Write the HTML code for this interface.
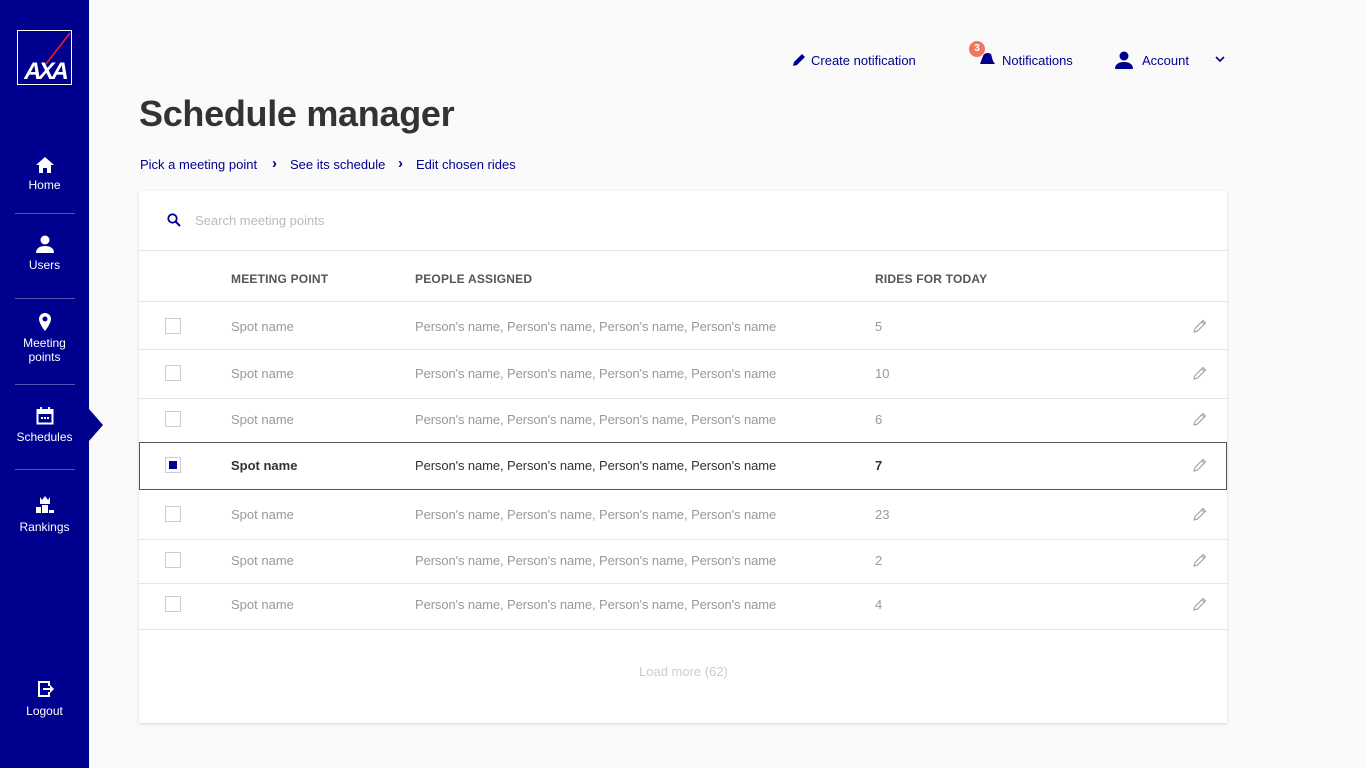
<!DOCTYPE html>
<html><head><meta charset="utf-8"><style>
*{margin:0;padding:0;box-sizing:border-box}
body{width:1366px;height:768px;background:#fafafa;font-family:"Liberation Sans",sans-serif;position:relative;overflow:hidden}
.sb{position:absolute;left:0;top:0;width:89px;height:768px;background:#00008f;color:#fff}
.logo{position:absolute;left:17px;top:30px;width:55px;height:55px;border:1px solid #fff}
.nav{position:absolute;left:0;width:89px;text-align:center;font-size:12px;line-height:14px}
.nav svg{display:block;margin:0 auto 4px}
.sep{position:absolute;left:15px;width:60px;height:1px;background:#5555b5}
.a{position:absolute;left:89px;top:409px;width:0;height:0;border-top:16px solid transparent;border-bottom:16px solid transparent;border-left:14px solid #00008f}
.t{position:absolute;font-size:13px;color:#00008f}
h1{position:absolute;left:139px;top:93px;font-size:36px;font-weight:bold;color:#333;letter-spacing:-0.3px}
.card{position:absolute;left:139px;top:191px;width:1088px;height:532px;background:#fff;box-shadow:0 1px 3px rgba(0,0,0,.15)}
.hl{position:absolute;left:0;width:1088px;height:1px;background:#e5e5e5}
.c{position:absolute;font-size:13px;color:#999;white-space:nowrap}
.cb{position:absolute;width:16px;height:16px;border:1px solid #ccc}
.th{position:absolute;top:81px;font-size:12px;font-weight:bold;color:#555;letter-spacing:.2px}
</style></head><body>
<div class="sb">
<div class="logo"><svg width="55" height="55" viewBox="0 0 55 55"><line x1="28" y1="33" x2="52" y2="2" stroke="#ff1721" stroke-width="1.5"/><text x="27" y="48" text-anchor="middle" font-family="Liberation Sans" font-weight="bold" font-style="italic" font-size="24" fill="#fff" letter-spacing="-3">AXA</text></svg></div>
<div class="nav" style="top:156px"><svg width="20" height="18" viewBox="0 0 20 18"><path d="M10 1L1 9h3v8h4v-5h4v5h4V9h3z" fill="#fff"/></svg>Home</div>
<div class="sep" style="top:213px"></div>
<div class="nav" style="top:234px"><svg width="20" height="20" viewBox="0 0 20 20"><circle cx="10" cy="6" r="4.5" fill="#fff"/><path d="M1 19c0-5 4-7 9-7s9 2 9 7z" fill="#fff"/></svg>Users</div>
<div class="sep" style="top:298px"></div>
<div class="nav" style="top:312px"><svg width="16" height="20" viewBox="0 0 16 20"><path d="M8 1a6 6 0 0 0-6 6c0 4.5 6 12 6 12s6-7.5 6-12a6 6 0 0 0-6-6zm0 8.5a2.5 2.5 0 1 1 0-5 2.5 2.5 0 0 1 0 5z" fill="#fff"/></svg>Meeting<br>points</div>
<div class="sep" style="top:384px"></div>
<div class="nav" style="top:406px"><svg width="18" height="20" viewBox="0 0 18 18"><rect x="1.5" y="3" width="15" height="13.5" fill="none" stroke="#fff" stroke-width="2"/><rect x="1" y="3" width="16" height="4" fill="#fff"/><rect x="4" y="0" width="2" height="4" fill="#fff"/><rect x="12" y="0" width="2" height="4" fill="#fff"/><rect x="5" y="10" width="2" height="2" fill="#fff"/><rect x="8" y="10" width="2" height="2" fill="#fff"/><rect x="11" y="10" width="2" height="2" fill="#fff"/></svg>Schedules</div>
<div class="sep" style="top:469px"></div>
<div class="nav" style="top:494px"><svg width="22" height="22" viewBox="0 0 22 20"><path d="M6 2l2 3 3-4 3 4 2-3v7H6z" fill="#fff"/><rect x="2" y="12" width="5" height="6" fill="#fff"/><rect x="8" y="10" width="6" height="8" fill="#fff"/><rect x="15" y="15" width="5" height="3" fill="#fff"/></svg>Rankings</div>
<div class="nav" style="top:678px"><svg width="20" height="22" viewBox="0 0 20 20"><path d="M3 2h12v5h-2V4H5v12h8v-3h2v5H3z M8 9h7V6l4 4-4 4v-3H8z" fill="#fff"/></svg>Logout</div>
</div>
<div class="a"></div>
<svg style="position:absolute;left:793px;top:53px" width="13" height="13" viewBox="0 0 13 13"><path d="M0 13l1-4 8-8 3 3-8 8z" fill="#00008f"/></svg>
<div class="t" style="left:811px;top:53px">Create notification</div>
<svg style="position:absolute;left:976px;top:50px" width="20" height="20" viewBox="0 0 20 20"><path d="M4 14l3-8c1-3 5-4 8-2l2 7 2 3z" fill="#00008f"/></svg>
<div style="position:absolute;left:969px;top:41px;width:16px;height:16px;border-radius:50%;background:#f07662;color:#fff;font-size:10px;font-weight:bold;text-align:center;line-height:16px">3</div>
<div class="t" style="left:1002px;top:53px">Notifications</div>
<svg style="position:absolute;left:1114px;top:51px" width="20" height="18" viewBox="0 0 20 18"><circle cx="10" cy="5" r="4.5" fill="#00008f"/><path d="M1 18c0-5 4-7 9-7s9 2 9 7z" fill="#00008f"/></svg>
<div class="t" style="left:1142px;top:53px">Account</div>
<svg style="position:absolute;left:1215px;top:56px" width="10" height="7" viewBox="0 0 10 7"><path d="M1 1l4 4 4-4" stroke="#00008f" stroke-width="1.6" fill="none"/></svg>
<h1>Schedule manager</h1>
<div class="t" style="left:140px;top:157px">Pick a meeting point</div>
<div class="t" style="left:272px;top:155px;font-weight:bold;font-size:15px">›</div>
<div class="t" style="left:290px;top:157px">See its schedule</div>
<div class="t" style="left:398px;top:155px;font-weight:bold;font-size:15px">›</div>
<div class="t" style="left:416px;top:157px">Edit chosen rides</div>
<div class="card">
<svg style="position:absolute;left:28px;top:22px" width="14" height="14" viewBox="0 0 14 14"><circle cx="5.5" cy="5.5" r="4.2" stroke="#00008f" stroke-width="1.8" fill="none"/><path d="M8.5 8.5l4.5 4.5" stroke="#00008f" stroke-width="2"/></svg>
<div class="c" style="left:56px;top:22px;color:#bbb">Search meeting points</div>
<div class="hl" style="top:59px"></div>
<div class="th" style="left:92px">MEETING POINT</div>
<div class="th" style="left:276px">PEOPLE ASSIGNED</div>
<div class="th" style="left:736px">RIDES FOR TODAY</div>
<div class="hl" style="top:110px"></div>
<div class="hl" style="top:158px"></div>
<div class="hl" style="top:207px"></div>
<div style="position:absolute;left:0;top:251px;width:1088px;height:48px;border:1px solid #555"></div>
<div class="hl" style="top:348px"></div>
<div class="hl" style="top:392px"></div>
<div class="hl" style="top:438px"></div>
<div class="c" style="left:500px;top:473px;color:#ccc">Load more (62)</div>
</div>
<div id="rows"></div>
<script>
var ys=[326,373,419,465,514,560,604],n=[5,10,6,7,23,2,4],h='';
ys.forEach(function(y,i){var s=i==3,col=s?'#333':'#999',fw=s?'bold':'normal';
h+='<div class="cb" style="left:165px;top:'+(y-8)+'px">'+(s?'<div style="margin:3px;width:8px;height:8px;background:#00008f"></div>':'')+'</div>';
h+='<div class="c" style="left:231px;top:'+(y-7)+'px;color:'+col+';font-weight:'+fw+'">Spot name</div>';
h+='<div class="c" style="left:415px;top:'+(y-7)+'px;color:'+col+';letter-spacing:-0.1px">Person\'s name, Person\'s name, Person\'s name, Person\'s name</div>';
h+='<div class="c" style="left:875px;top:'+(y-7)+'px;color:'+col+';font-weight:'+fw+'">'+n[i]+'</div>';
h+='<svg style="position:absolute;left:1193px;top:'+(y-7)+'px" width="14" height="14" viewBox="0 0 14 14"><path d="M1 13l1-3.5 8-8 2.5 2.5-8 8z M9 3l2.5 2.5" stroke="#999" fill="none"/></svg>';});
document.getElementById('rows').innerHTML=h;
</script>
</body></html>
